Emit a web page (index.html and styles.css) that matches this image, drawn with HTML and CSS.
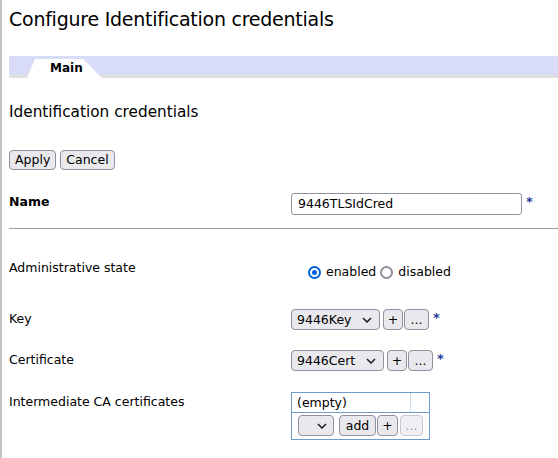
FILE: index.html
```html
<!DOCTYPE html>
<html>
<head>
<meta charset="utf-8">
<link rel="stylesheet" href="styles.css">
</head>
<body>
<div class="page">
  <h1 class="title">Configure Identification credentials</h1>
  <div class="tabbar">
    <div class="tab">Main</div>
  </div>
  <h2 class="section">Identification credentials</h2>
  <div class="actions">
    <button class="btn">Apply</button>
    <button class="btn">Cancel</button>
  </div>
  <div class="row row-name">
    <div class="label bold">Name</div>
    <div class="value">
      <span class="input">9446TLSIdCred</span><span class="req">*</span>
    </div>
  </div>
  <hr class="sep">
  <div class="row row-admin">
    <div class="label">Administrative state</div>
    <div class="value radios">
      <span class="radio checked"></span><span class="rlabel">enabled</span>
      <span class="radio"></span><span class="rlabel">disabled</span>
    </div>
  </div>
  <div class="row row-sel">
    <div class="label">Key</div>
    <div class="value">
      <span class="select sel-key">9446Key<svg class="chev" width="10" height="6" viewBox="0 0 10 6"><path d="M1 1 L5 5 L9 1" fill="none" stroke="#1a1a1a" stroke-width="1.5"/></svg></span><span class="btn small plus">+</span><span class="btn small dots">...</span><span class="req">*</span>
    </div>
  </div>
  <div class="row row-sel">
    <div class="label">Certificate</div>
    <div class="value">
      <span class="select sel-cert">9446Cert<svg class="chev" width="10" height="6" viewBox="0 0 10 6"><path d="M1 1 L5 5 L9 1" fill="none" stroke="#1a1a1a" stroke-width="1.5"/></svg></span><span class="btn small plus">+</span><span class="btn small dots">...</span><span class="req">*</span>
    </div>
  </div>
  <div class="row row-ica">
    <div class="label">Intermediate CA certificates</div>
    <div class="value">
      <div class="listbox">
        <div class="list-row"><span class="list-cell">(empty)</span><span class="list-spacer"></span></div>
        <div class="list-ctrl">
          <span class="select sel-empty"><svg class="chev" width="10" height="6" viewBox="0 0 10 6"><path d="M1 1 L5 5 L9 1" fill="none" stroke="#1a1a1a" stroke-width="1.5"/></svg></span><span class="btn small add">add</span><span class="btn small plus2">+</span><span class="btn small dots disabled">...</span>
        </div>
      </div>
    </div>
  </div>
</div>
</body>
</html>
```
FILE: styles.css
```css
html, body {
  margin: 0;
  padding: 0;
  background: #ffffff;
}
body {
  font-family: "DejaVu Sans", Verdana, sans-serif;
  color: #000;
  width: 558px;
  height: 458px;
  overflow: hidden;
}
.page {
  border-left: 2px solid #c4c4c4;
  padding-left: 7px;
  height: 458px;
  box-sizing: border-box;
}
.title {
  margin: 0;
  padding-top: 7px;
  font-size: 19px;
  font-weight: normal;
  line-height: 24px;
  height: 49px;
  letter-spacing: -0.25px;
}
.tabbar {
  height: 19px;
  background: #d9dcf7;
  border-bottom: 3px solid #e0e0e0;
  position: relative;
}
.tab {
  position: absolute;
  left: 18px;
  top: 3px;
  width: 75px;
  height: 19px;
  background: #fff;
  clip-path: polygon(8px 0, 56px 0, 75px 19px, 0 19px);
  font-size: 12px;
  font-weight: bold;
  line-height: 19px;
  box-sizing: border-box;
  padding-left: 23px;
}
.section {
  margin: 0;
  padding-top: 25px;
  font-size: 15.3px;
  font-weight: normal;
  line-height: 18px;
  height: 50px;
  box-sizing: border-box;
}
.actions {
  margin-top: 22px;
  display: flex;
  gap: 4px;
  height: 20px;
}
.btn {
  font-family: "DejaVu Sans", Verdana, sans-serif;
  font-size: 12.5px;
  background: #e9e9ed;
  border: 1px solid #8f8f9d;
  border-radius: 4px;
  color: #000;
  height: 20px;
  padding: 0 5px;
  box-sizing: border-box;
  line-height: 18px;
  margin: 0;
  display: inline-flex;
  align-items: center;
  justify-content: center;
}
.row {
  display: grid;
  grid-template-columns: 282px auto;
  align-items: start;
  font-size: 12.5px;
}
.label {
  padding-top: 4px;
  line-height: 15px;
}
.bold { font-weight: bold; }
.value {
  display: flex;
  align-items: flex-start;
}
.row-name {
  margin-top: 20px;
  height: 34px;
}
.row-name .value { padding-top: 3px; }
.input {
  width: 231px;
  height: 22px;
  box-sizing: border-box;
  border: 1px solid #8f8f9d;
  border-radius: 3px;
  padding-left: 6px;
  line-height: 20px;
  font-size: 12.5px;
}
.req {
  color: #2a3a9c;
  font-weight: bold;
  font-size: 13px;
  margin-left: 4px;
  line-height: 14px;
  padding-top: 2px;
}
.sep {
  margin: 4px 0 0 0;
  border: 0;
  border-top: 1px solid #a0a0a0;
  height: 0;
}
.row-admin {
  margin-top: 27px;
  height: 51px;
}
.radios {
  padding-top: 9px;
  padding-left: 17px;
  align-items: center;
}
.radio {
  width: 13px;
  height: 13px;
  box-sizing: border-box;
  border: 2px solid #8f8f9d;
  border-radius: 50%;
  display: inline-block;
  position: relative;
}
.radio.checked {
  border-color: #0060df;
}
.radio.checked::after {
  content: "";
  position: absolute;
  left: 2px;
  top: 2px;
  width: 5px;
  height: 5px;
  border-radius: 50%;
  background: #0060df;
}
.rlabel {
  margin-left: 5px;
  margin-right: 4px;
  line-height: 15px;
  position: relative;
  top: -1px;
}
.row-sel {
  height: 41px;
}
.row-sel .value { padding-top: 2px; }
.select {
  display: inline-flex;
  align-items: center;
  justify-content: space-between;
  height: 21px;
  box-sizing: border-box;
  background: #e9e9ed;
  border: 1px solid #8f8f9d;
  border-radius: 4px;
  padding: 0 7px 0 5px;
  font-size: 12.5px;
  line-height: 19px;
}
.chev { flex: none; margin-left: 6px; }
.sel-key { width: 89px; }
.sel-cert { width: 93px; }
.small { height: 21px; }
.plus { width: 20px; margin-left: 3px; padding: 0; }
.dots { width: 25px; margin-left: 1px; padding: 0; line-height: 14px; }
.row-sel .req { margin-left: 4px; }
.row-ica {
  margin-top: 1px;
}
.listbox {
  margin-top: 2px;
  width: 139px;
  height: 48px;
  box-sizing: border-box;
  border: 1px solid #6f9ccd;
}
.list-row {
  display: flex;
  height: 20px;
  border-bottom: 1px solid #6f9ccd;
  box-sizing: border-box;
}
.list-cell {
  width: 119px;
  border-right: 1px dotted #9cc0e8;
  padding-left: 5px;
  line-height: 19px;
  box-sizing: border-box;
}
.list-ctrl {
  display: flex;
  padding: 2px 0 0 6px;
}
.sel-empty { width: 36px; justify-content: flex-end; padding-right: 6px; }
.sel-empty .chev { margin-left: 0; }
.add { width: 37px; margin-left: 5px; padding: 0; }
.plus2 { width: 21px; margin-left: 1px; padding: 0; }
.list-ctrl .dots { width: 23px; margin-left: 2px; }
.disabled {
  color: #9a9aa0;
  border-color: #c8c8d0;
  background: #f0f0f4;
}
```
